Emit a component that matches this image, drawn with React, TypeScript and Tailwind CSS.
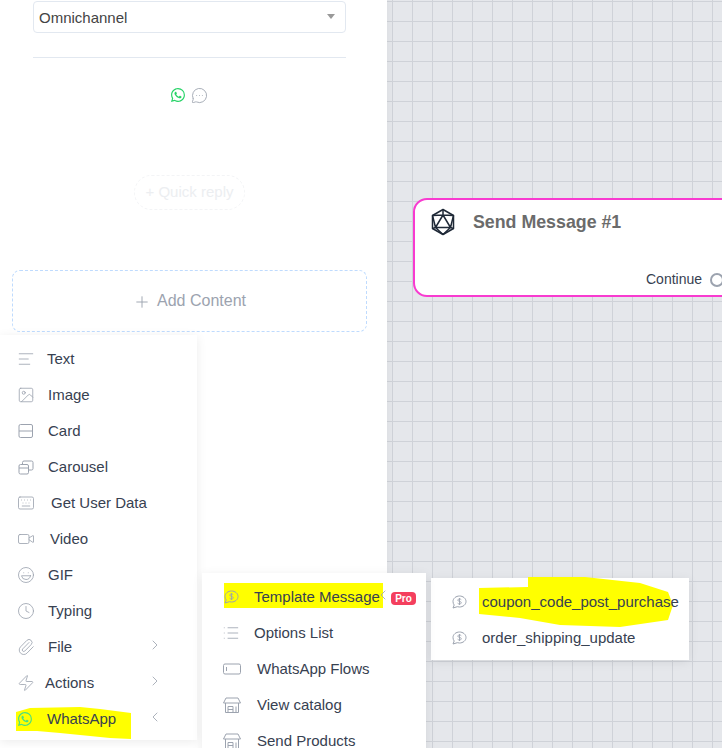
import React from 'react';
import {
  AlignLeft,
  ChevronLeft,
  ChevronRight,
  Clock,
  Image,
  Keyboard,
  Laugh,
  List,
  MessageCircleMore,
  Paperclip,
  Plus,
  Video,
  Zap,
} from 'lucide-react';
import { BsWhatsapp } from 'react-icons/bs';

const iconClass = 'w-4 h-4 text-[#9ca3af] shrink-0';
const lucideClass = 'w-[18px] h-[18px] -mx-px text-[#9ca3af] shrink-0';

const CardIcon = () => (
  <svg viewBox="0 0 16 16" fill="none" stroke="currentColor" strokeWidth="1" className={iconClass}>
    <rect x="1" y="1.5" width="13.5" height="13" rx="1.5" />
    <path d="M1 8h13.5" />
  </svg>
);

const CarouselIcon = () => (
  <svg viewBox="0 0 16 16" fill="none" stroke="currentColor" strokeWidth="1" className={iconClass}>
    <rect x="1" y="5.5" width="9.5" height="9.5" rx="1.5" />
    <path d="M1 9h9.5M4.5 5.5V3.5q0-1.5 1.5-1.5h7.500q1.500 0 1.500 1.500v6q0 1.500-1.500 1.500h-3" />
  </svg>
);

const TemplateIcon = ({ className = iconClass }: { className?: string }) => (
  <svg viewBox="0 0 16 16" fill="none" stroke="currentColor" strokeWidth="1" className={className}>
    <path d="M8.500 2C12 2 15 4.400 15 7.500S12 13 8.500 13c-.8 0-1.500-.1-2.200-.3L2 14l1.200-3C2.400 10 2 8.800 2 7.500 2 4.400 5 2 8.500 2z" />
    <path d="M10.300 5.700C9.900 5.200 9.300 5 8.500 5c-1 0-1.700.5-1.700 1.200 0 1.600 3.500.8 3.500 2.500 0 .8-.8 1.300-1.800 1.300-.8 0-1.500-.3-1.900-.8M8.500 4v7" strokeWidth="0.9" />
  </svg>
);

const FlowsIcon = () => (
  <svg viewBox="0 0 18 12" fill="none" stroke="currentColor" strokeWidth="1" className="w-[18px] h-3 text-[#9ca3af] shrink-0">
    <rect x="0.5" y="1" width="17" height="10" rx="1.5" />
    <path d="M3.500 4v4" />
  </svg>
);

const ShopIcon = () => (
  <svg viewBox="0 0 18 16" fill="none" stroke="currentColor" strokeWidth="1" className="w-[18px] h-4 text-[#9ca3af] shrink-0">
    <path d="M3 1h12l2.500 5H.5zM2.500 6v9.500h13V6M5 15.500V9.500h5v6M5 12.500h5M13 9.500v6" />
  </svg>
);

const NodeIcon = () => (
  <svg viewBox="0 0 24 28" fill="none" stroke="#1f2937" strokeWidth="1.5" strokeLinejoin="round" className="w-6 h-7 shrink-0">
    <path d="M12 1.500 22.500 7.500v13L12 26.500 1.500 20.500v-13z" />
    <path d="M12 7 19.500 19.500h-15zM12 1.500V7M12 7 1.500 7.500M12 7l10.500.5M4.500 19.500 1.500 7.500M4.500 19.500l-3 1M4.500 19.500 12 26.500M19.500 19.500 22.500 7.500M19.500 19.500l3 1M19.500 19.500 12 26.500" />
  </svg>
);

const mainItems = [
  { label: 'Text', icon: <AlignLeft strokeWidth={1.1} className={lucideClass} />, labelClass: 'pl-[13px]' },
  { label: 'Image', icon: <Image strokeWidth={1.1} className={lucideClass} />, labelClass: 'pl-[14px]' },
  { label: 'Card', icon: <CardIcon />, labelClass: 'pl-[14px]' },
  { label: 'Carousel', icon: <CarouselIcon />, labelClass: 'pl-[14px]' },
  { label: 'Get User Data', icon: <Keyboard strokeWidth={1.1} className={lucideClass} />, labelClass: 'pl-[17px]' },
  { label: 'Video', icon: <Video strokeWidth={1.1} className={lucideClass} />, labelClass: 'pl-[16px]' },
  { label: 'GIF', icon: <Laugh strokeWidth={1.1} className={lucideClass} />, labelClass: 'pl-[14px]' },
  { label: 'Typing', icon: <Clock strokeWidth={1.1} className={lucideClass} />, labelClass: 'pl-[14px]' },
  { label: 'File', icon: <Paperclip strokeWidth={1.1} className={lucideClass} />, labelClass: 'pl-[14px]', arrow: 'right' },
  { label: 'Actions', icon: <Zap strokeWidth={1.1} className={lucideClass} />, labelClass: 'pl-[11px]', arrow: 'right' },
  { label: 'WhatsApp', icon: <BsWhatsapp className="w-[14px] h-[14px] mr-[2px] text-[#4ade80] shrink-0" />, labelClass: 'pl-[13px]', arrow: 'left' },
];

const whatsappItems = [
  { label: 'Template Message', icon: <TemplateIcon />, labelClass: 'pl-[15px]' },
  { label: 'Options List', icon: <List strokeWidth={1.1} className={lucideClass} />, labelClass: 'pl-[15px]' },
  { label: 'WhatsApp Flows', icon: <FlowsIcon />, labelClass: 'pl-4' },
  { label: 'View catalog', icon: <ShopIcon />, labelClass: 'pl-4' },
  { label: 'Send Products', icon: <ShopIcon />, labelClass: 'pl-4' },
];

const templates = ['coupon_code_post_purchase', 'order_shipping_update'];

const Marker = ({ points }: { points: string }) => (
  <svg className="absolute inset-0 w-full h-full overflow-visible">
    <polygon points={points} fill="#ffff00" />
  </svg>
);

export default function App() {
  return (
    <div className="relative w-[722px] h-[748px] overflow-hidden flex font-['Liberation_Sans',Arial,sans-serif] text-[15px] text-[#374151]">
      {/* Left panel */}
      <div className="w-[387px] h-full bg-white shrink-0 z-10 flex flex-col shadow-[2px_0_6px_rgba(0,0,0,0.04)]">
        <div className="px-[33px] pt-px w-[379px]">
          <div className="h-8 border border-[#e2e8f0] rounded flex items-center justify-between pl-[5px] pr-[10px] text-[#444]">
            <span className="pt-[3px]">Omnichannel</span>
            <span className="w-0 h-0 border-x-[4px] border-x-transparent border-t-[5px] border-t-[#999] -mt-0.5" />
          </div>
          <div className="mt-6 border-t border-[#e2e8f0]" />
          <div className="mt-[29px] flex items-center justify-center gap-[6px] pr-px h-4">
            <BsWhatsapp className="w-[14px] h-[14px] text-[#25d366]" />
            <MessageCircleMore strokeWidth={1.25} className="w-[17px] h-[17px] text-[#9ca3af]" />
          </div>
        </div>
        <div className="mt-[72px] ml-[134px] w-[111px] h-[35px] rounded-full border border-dashed border-[#f3f4f6] flex items-center justify-center text-[#eceef1] text-[15px]">
          + Quick reply
        </div>
        <div className="mt-[60px] ml-3 w-[355px] h-[62px] rounded-lg border border-dashed border-[#bfdbfe] flex items-center justify-center gap-[6px] pb-px text-[16px] text-[#9ca3af]">
          <Plus strokeWidth={1.25} className="w-[18px] h-[18px] mt-0.5" />
          Add Content
        </div>
      </div>

      {/* Canvas */}
      <div className="relative flex-1 h-full bg-[#e5e7eb] bg-[linear-gradient(#cfd2d8_1px,transparent_1px),linear-gradient(90deg,#cfd2d8_1px,transparent_1px)] bg-[size:20px_20px] bg-[position:5px_1px]">
        <div className="absolute left-[26px] top-[198px] w-[400px] h-[99px] bg-white border-2 border-[#f83bd0] rounded-[14px] flex flex-col">
          <div className="flex items-center gap-[18px] pl-4 pt-2">
            <NodeIcon />
            <span className="text-[17.8px] font-bold text-[#6b6b6b]">Send Message #1</span>
          </div>
          <div className="absolute left-[231px] top-[69px] flex items-center gap-2 text-[14px]">
            <span className="text-[#374151]">Continue</span>
            <span className="w-[14px] h-[14px] rounded-full border-2 border-[#9ca3af] bg-white" />
          </div>
        </div>
      </div>

      {/* Add content menu */}
      <div className="absolute z-20 left-0 top-[335px] w-[197px] pt-1.5 pb-[3px] bg-white shadow-[0_2px_10px_rgba(0,0,0,0.08)]">
        <Marker points="16,377 30,373 80,372 100,374 131,378 131,404 110,403 60,398 37,396 16,396" />
        {mainItems.map((item) => (
          <div key={item.label} className="relative h-9 flex items-center pl-[18px]">
            {item.icon}
            <span className={item.labelClass}>{item.label}</span>
            {item.arrow === 'right' && (
              <ChevronRight strokeWidth={1.25} className="absolute left-[147px] top-[8px] w-4 h-4 text-[#9ca3af]" />
            )}
            {item.arrow === 'left' && (
              <ChevronLeft strokeWidth={1.25} className="absolute left-[147px] top-[8px] w-4 h-4 text-[#9ca3af]" />
            )}
          </div>
        ))}
      </div>

      {/* WhatsApp submenu */}
      <div className="absolute z-30 left-[202px] top-[573px] w-[224px] pt-1.5 pb-4 bg-white shadow-[0_2px_10px_rgba(0,0,0,0.08)]">
        <Marker points="22,10 181,10 181,35 22,35" />
        {whatsappItems.map((item, i) => (
          <div key={item.label} className="relative h-9 flex items-center pl-[21px]">
            {item.icon}
            <span className={item.labelClass}>{item.label}</span>
            {i === 0 && (
              <>
                <ChevronLeft strokeWidth={1.25} className="absolute left-[173px] top-[8px] w-4 h-4 text-[#9ca3af]" />
                <span className="absolute left-[189px] top-[13px] w-[25px] h-[13px] rounded bg-[#f43f5e] text-white text-[10px] leading-[13px] font-bold text-center">
                  Pro
                </span>
              </>
            )}
          </div>
        ))}
      </div>

      {/* Template list */}
      <div className="absolute z-20 left-[431px] top-[578px] w-[258px] h-[82px] pt-1.5 bg-white shadow-[0_2px_10px_rgba(0,0,0,0.08)]">
        <Marker points="48,10 97,9 97,-1 154,-1 209,5 237,14 242,27 237,42 189,49 129,47 89,40 48,36" />
        {templates.map((name) => (
          <div key={name} className="relative h-9 flex items-center pl-5 gap-[15px]">
            <TemplateIcon />
            <span>{name}</span>
          </div>
        ))}
      </div>
    </div>
  );
}
